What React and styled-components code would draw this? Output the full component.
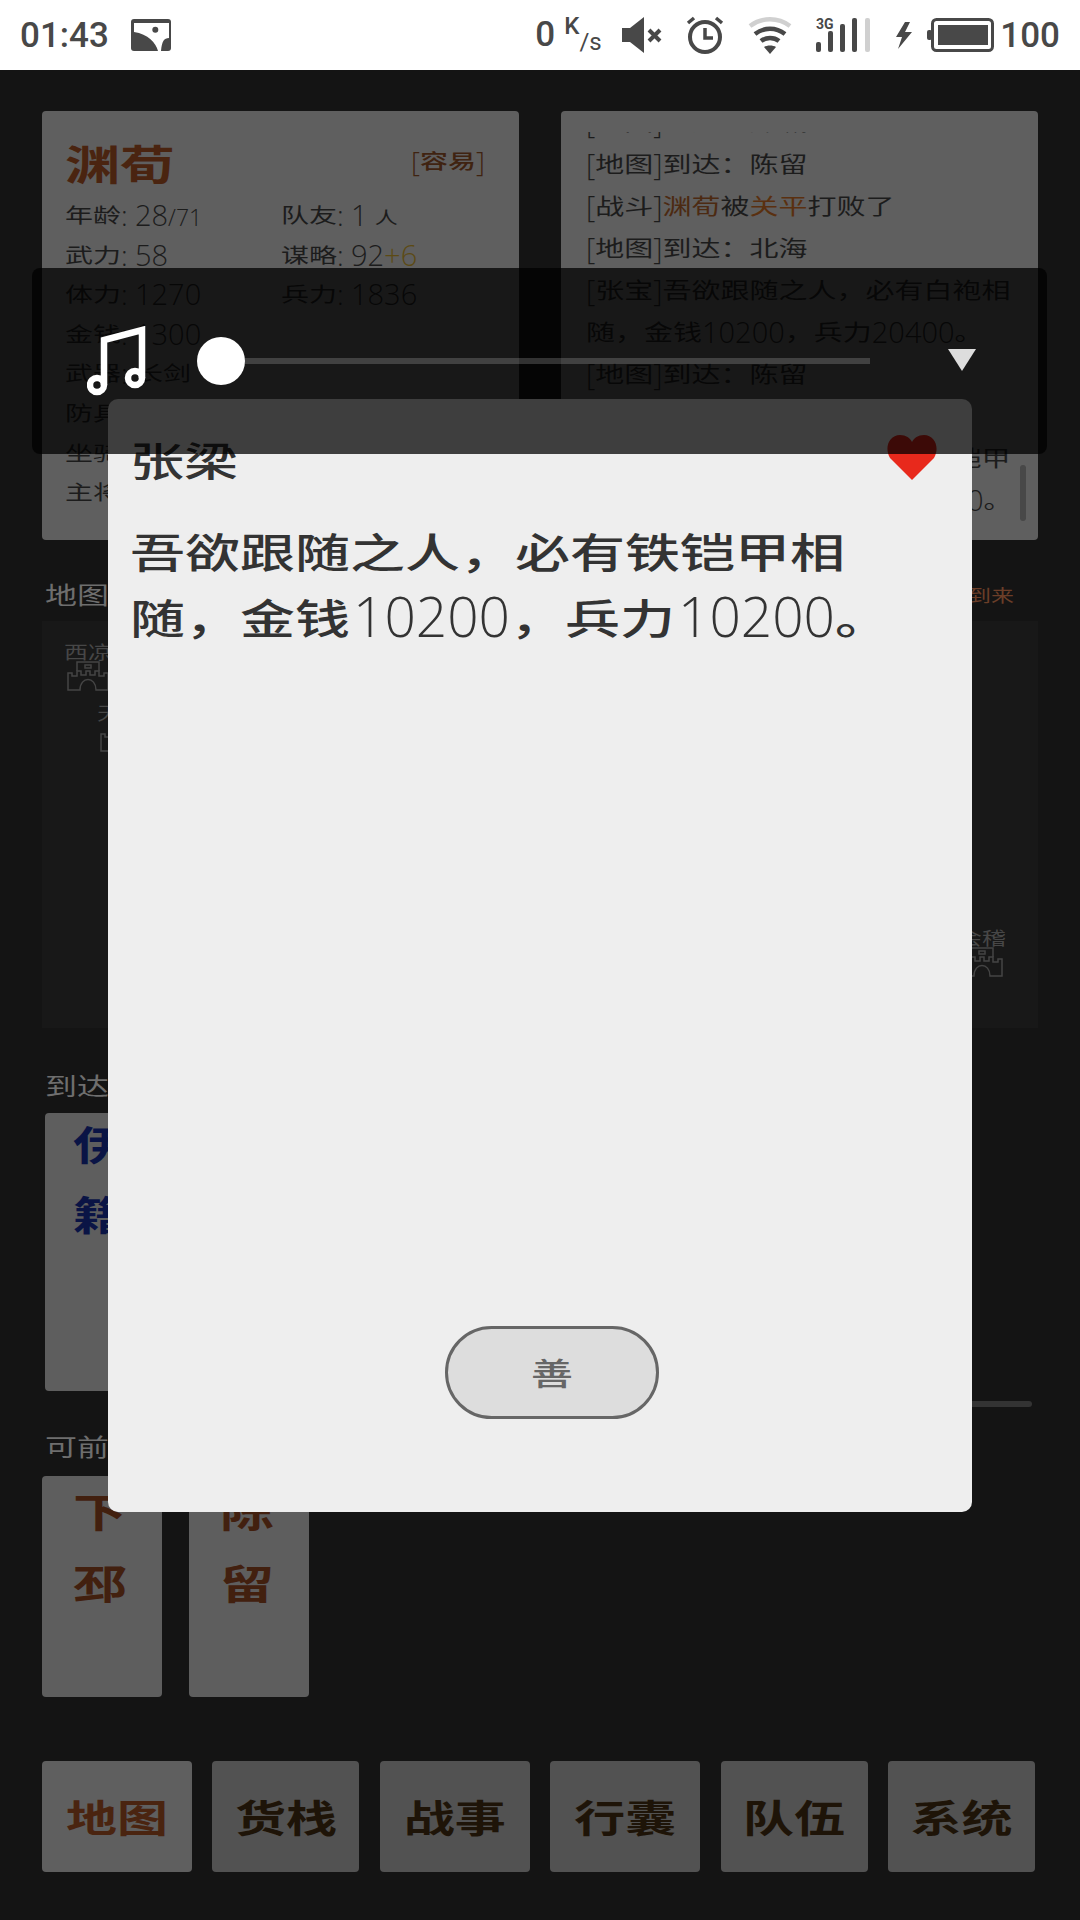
import React from "react";
import styled, { createGlobalStyle } from "styled-components";

const Global = createGlobalStyle`
  html, body { margin: 0; padding: 0; background: #141414; }
  * { box-sizing: border-box; }
`;

const CJK = `"Noto Sans CJK SC", "Noto Sans", sans-serif`;
const LATIN = `"Open Sans", "Noto Sans CJK SC", sans-serif`;

const Screen = styled.div`
  position: relative;
  width: 1080px;
  height: 1920px;
  overflow: hidden;
  background: #141414;
  font-family: ${LATIN};
  font-weight: 300;
`;

/* ---------- status bar ---------- */
const StatusBar = styled.div`
  height: 70px;
  background: #fff;
  display: flex;
  align-items: center;
  justify-content: space-between;
  padding: 0 20px 0 20px;
  color: #484848;
  font-family: Roboto, sans-serif;
  font-weight: 500;
  font-size: 35px;
`;
const StatusGroup = styled.div`
  display: flex;
  align-items: center;
`;
const StatusIcon = styled.svg`
  display: block;
  flex: none;
  margin-left: ${(p) => p.$ml || 0}px;
`;
const Speed = styled.div`
  display: flex;
  align-items: flex-start;
  height: 40px;
  line-height: 40px;
  width: 66px;
`;
const SpeedUnit = styled.span`
  font-size: 24px;
  line-height: 22px;
  margin-left: 9px;
`;
const SpeedSub = styled.span`
  font-size: 24px;
  line-height: 22px;
  margin-top: 16px;
  font-weight: 400;
`;
const Percent = styled.span`
  margin-left: 6px;
`;

/* ---------- squat clerical-looking CJK run ---------- */
const Li = styled.span`
  display: inline-block;
  font-family: ${CJK};
  font-weight: ${(p) => p.$w || 400};
  transform: scaleY(0.74);
  white-space: pre;
`;
const Rich = ({ text, w }) =>
  text
    .split(/([\u3000-\u9fff\uff00-\uffef]+)/)
    .map((part, i) =>
      i % 2 ? (
        <Li key={i} $w={w}>
          {part}
        </Li>
      ) : (
        part
      )
    );

/* ---------- base page ---------- */
const TopCards = styled.div`
  display: grid;
  grid-template-columns: 477px 477px;
  gap: 42px;
  padding: 41px 42px 0;
`;
const Card = styled.div`
  position: relative;
  height: 429px;
  background: #5f5f5f;
  border-radius: 4px;
  overflow: hidden;
`;
const PersonCard = styled(Card)`
  padding: 30px 34px 0 23px;
  color: #1c1c1c;
`;
const PersonHead = styled.div`
  display: flex;
  justify-content: space-between;
  align-items: center;
  height: 44px;
`;
const PersonName = styled.div`
  font-size: 55px;
  line-height: 44px;
  color: #4a2410;
`;
const Difficulty = styled.div`
  font-size: 28px;
  line-height: 36px;
  color: #3f2311;
  margin-top: -5px;
`;
const StatGrid = styled.div`
  display: grid;
  grid-template-columns: 216px 1fr;
  grid-auto-rows: 39.6px;
  margin-top: 10px;
  font-size: 28px;
  line-height: 39.6px;
  white-space: nowrap;
`;
const Digits = styled.span`
  font-size: 29px;
`;
const Small = styled.span`
  font-size: 23px;
`;
const Bonus = styled.span`
  color: #5c4a14;
`;
const FullRow = styled.div`
  grid-column: 1 / 3;
`;

const LogCard = styled(Card)`
  padding: 21px 0 0 25px;
`;
const LogClip = styled.div`
  height: 408px;
  overflow: hidden;
`;
const LogList = styled.div`
  margin-top: -33px;
  font-size: 29px;
  line-height: 42px;
  color: #1c1c1c;
  white-space: nowrap;
`;
const LogLine = styled.div`
  height: 42px;
`;
const Colored = styled.span`
  color: ${(p) => p.$c};
`;
const Scrollbar = styled.div`
  position: absolute;
  left: 459px;
  top: 354px;
  width: 6px;
  height: 56px;
  border-radius: 3px;
  background: #484848;
`;

const SectionHead = styled.div`
  display: flex;
  justify-content: space-between;
  align-items: center;
  height: 26px;
  margin-top: ${(p) => p.$mt}px;
  padding: 0 66px 0 45px;
`;
const SectionLabel = styled.div`
  font-size: 32px;
  line-height: 26px;
  color: #6e6e6e;
  white-space: nowrap;
`;
const Coming = styled.div`
  font-size: 23px;
  line-height: 26px;
  color: #6b3e28;
`;
const MapArea = styled.div`
  position: relative;
  height: 407px;
  margin: 13px 42px 0;
  background: #181818;
`;
const MapNode = styled.div`
  position: absolute;
  left: ${(p) => p.$x}px;
  top: ${(p) => p.$y}px;
  width: 48px;
  display: flex;
  flex-direction: column;
  align-items: center;
  color: #474747;
  font-size: 24px;
  line-height: 17px;
`;
const Fort = styled.svg`
  display: block;
  margin-top: 1px;
`;

const ArriveRow = styled.div`
  margin-top: 14px;
  padding-left: 45px;
`;
const PlaceCard = styled.div`
  width: ${(p) => p.$w}px;
  height: ${(p) => p.$h}px;
  background: #5e5e5e;
  border-radius: 4px;
  color: ${(p) => p.$c};
  font-size: 54px;
  overflow: hidden;
`;
const PlaceStack = styled.div`
  margin-top: ${(p) => p.$top}px;
  padding-left: ${(p) => p.$left}px;
  line-height: ${(p) => p.$pitch}px;
`;
const PlaceChar = styled.div``;
const LowerBar = styled.div`
  height: 6px;
  margin: 10px 48px 0 auto;
  width: 120px;
  border-radius: 3px;
  background: #333;
`;
const RoutesRow = styled.div`
  display: flex;
  gap: 27px;
  margin-top: 16px;
  padding-left: 42px;
`;
const NavBar = styled.div`
  display: flex;
  justify-content: space-between;
  margin-top: 64px;
  padding: 0 45px 0 42px;
`;
const NavButton = styled.div`
  width: ${(p) => p.$w}px;
  height: 111px;
  border-radius: 4px;
  background: ${(p) => (p.$active ? "#5f5f5f" : "#525252")};
  color: ${(p) => (p.$active ? "#4a2410" : "#1e1408")};
  font-size: 51px;
  line-height: 111px;
  text-align: center;
`;

/* ---------- dialog ---------- */
const Modal = styled.div`
  position: absolute;
  left: 108px;
  top: 399px;
  width: 864px;
  height: 1113px;
  border-radius: 10px;
  background: #eee;
  display: flex;
  flex-direction: column;
  padding: 38px 35px 93px 22px;
  color: #333;
`;
const ModalHead = styled.div`
  display: flex;
  justify-content: space-between;
  align-items: center;
  height: 46px;
`;
const ModalTitle = styled.div`
  font-size: 54px;
  line-height: 46px;
`;
const Heart = styled.svg`
  display: block;
  margin-top: -6px;
`;
const ModalBody = styled.div`
  margin-top: 34px;
  font-size: 55px;
  line-height: 66px;
  white-space: nowrap;
`;
const ModalLine = styled.div`
  height: 66px;
`;
const ModalNum = styled.span`
  font-size: 55px;
  margin-left: 3px;
  vertical-align: 3px;
`;
const OkButton = styled.div`
  align-self: center;
  margin: auto 0 0 37px;
  width: 214px;
  height: 93px;
  border: 3px solid #666;
  border-radius: 47px;
  background: #ddd;
  color: #666;
  font-size: 42px;
  line-height: 85px;
  text-align: center;
`;

/* ---------- music panel ---------- */
const MusicPanel = styled.div`
  position: absolute;
  left: 32px;
  top: 268px;
  width: 1015px;
  height: 186px;
  border-radius: 8px;
  background: rgba(0, 0, 0, 0.74);
  display: flex;
  align-items: center;
  padding-left: 55px;
`;
const MusicIcon = styled.svg`
  display: block;
  flex: none;
`;
const Slider = styled.div`
  display: flex;
  align-items: center;
  width: 673px;
  margin-left: 51px;
`;
const Thumb = styled.div`
  flex: none;
  width: 48px;
  height: 48px;
  border-radius: 50%;
  background: #fff;
`;
const Track = styled.div`
  flex: 1;
  height: 6px;
  background: rgba(255, 255, 255, 0.18);
`;
const Caret = styled.div`
  width: 0;
  height: 0;
  margin: -2px 0 0 78px;
  border-left: 14.5px solid transparent;
  border-right: 14.5px solid transparent;
  border-top: 22px solid #ddd;
`;

const FortIcon = () => (
  <Fort width="42" height="30" viewBox="0 0 42 30" fill="none" stroke="#444" strokeWidth="1.5">
    <path d="M1 29V12H5V15H10V10H14V14H19V10H23V14H28V10H32V15H37V12H41V29H29C29 15 13 15 13 29Z" />
    <path d="M10 10V1H32V10" />
    <rect x="18" y="4" width="6" height="3" />
  </Fort>
);

const logs = [
  [{ t: "[地图]到达：彭城" }],
  [{ t: "[地图]到达：陈留" }],
  [{ t: "[战斗]" }, { t: "渊荀", c: "#4c2a12" }, { t: "被" }, { t: "关平", c: "#5a3010" }, { t: "打败了" }],
  [{ t: "[地图]到达：北海" }],
  [{ t: "[张宝]吾欲跟随之人，必有白袍相" }],
  [{ t: "随，金钱10200，兵力20400。" }],
  [{ t: "[地图]到达：陈留" }],
  [{ t: "[地图]到达：下邳" }],
  [{ t: "[张角]吾欲跟随之人，必有铁铠甲" }],
  [{ t: "相随，金钱10200，兵力10200。" }],
];

const tabs = [
  ["地图", 150, true],
  ["货栈", 147],
  ["战事", 150],
  ["行囊", 150],
  ["队伍", 147],
  ["系统", 147],
];

export default function App() {
  return (
    <Screen>
      <Global />
      <StatusBar>
        <StatusGroup>
          01:43
          <StatusIcon $ml={22} width="40" height="32" viewBox="0 0 40 32">
            <rect width="40" height="32" rx="3" fill="#484848" />
            <path d="M3 4H38V19C33 19 31 22 30 32H27C25 24 17 15 3 13Z" fill="#fff" />
            <circle cx="24.3" cy="10.7" r="3" fill="#484848" />
          </StatusIcon>
        </StatusGroup>
        <StatusGroup>
          <Speed>
            0<SpeedUnit>K</SpeedUnit>
            <SpeedSub>/s</SpeedSub>
          </Speed>
          <StatusIcon $ml={21} width="40" height="36" viewBox="0 0 40 36" fill="#484848">
            <path d="M0 11H8L22 0V36L8 25H0Z" />
            <path d="M27 13L38 24M38 13L27 24" stroke="#484848" strokeWidth="4" />
          </StatusIcon>
          <StatusIcon $ml={24} width="38" height="38" viewBox="0 0 38 38" fill="none" stroke="#484848">
            <circle cx="19" cy="21" r="15" strokeWidth="4" />
            <path d="M19 12V22H27" strokeWidth="3.5" />
            <path d="M2 7L8 2M36 7L30 2" strokeWidth="3.5" />
          </StatusIcon>
          <StatusIcon $ml={24} width="44" height="38" viewBox="0 0 44 38" fill="none" strokeWidth="4.5">
            <path d="M2 10C14 1 30 1 42 10" stroke="#d0d0d0" />
            <path d="M7 18C16 11 28 11 37 18" stroke="#484848" />
            <path d="M13 25C18 21 26 21 31 25" stroke="#484848" />
            <path d="M22 38L16 31C19 29 25 29 28 31Z" fill="#484848" />
          </StatusIcon>
          <StatusIcon $ml={24} width="54" height="34" viewBox="0 0 54 34">
            <text x="0" y="11" fontFamily="Roboto, sans-serif" fontWeight="700" fontSize="14" fill="#484848">3G</text>
            <rect x="0" y="24" width="5" height="10" rx="2" fill="#484848" />
            <rect x="12" y="13" width="5" height="21" rx="2" fill="#484848" />
            <rect x="24" y="6" width="5" height="28" rx="2" fill="#484848" />
            <rect x="36" y="0" width="5" height="34" rx="2" fill="#484848" />
            <rect x="49" y="0" width="5" height="34" rx="2" fill="#d0d0d0" />
          </StatusIcon>
          <StatusIcon $ml={24} width="19" height="27" viewBox="0 0 19 27">
            <path d="M11 0L2 15H8L4 27L18 10H11L16 0Z" fill="#484848" />
          </StatusIcon>
          <StatusIcon $ml={14} width="67" height="34" viewBox="0 0 67 34" fill="none">
            <rect x="0" y="12" width="5" height="10" rx="2" fill="#484848" />
            <rect x="5.5" y="1.5" width="60" height="31" rx="4" stroke="#484848" strokeWidth="3" />
            <rect x="11" y="7" width="50" height="20" fill="#484848" />
          </StatusIcon>
          <Percent>100</Percent>
        </StatusGroup>
      </StatusBar>

      <TopCards>
        <PersonCard>
          <PersonHead>
            <PersonName>
              <Li $w={700}>渊荀</Li>
            </PersonName>
            <Difficulty>
              <Rich text="[容易]" w={500} />
            </Difficulty>
          </PersonHead>
          <StatGrid>
            <div>
              <Li>年龄</Li>: <Digits>28</Digits>
              <Small>/71</Small>
            </div>
            <div>
              <Li>队友</Li>: <Digits>1</Digits>{" "}
              <Small>
                <Li>人</Li>
              </Small>
            </div>
            <div>
              <Li>武力</Li>: <Digits>58</Digits>
            </div>
            <div>
              <Li>谋略</Li>: <Digits>92</Digits>
              <Digits>
                <Bonus>+6</Bonus>
              </Digits>
            </div>
            <div>
              <Li>体力</Li>: <Digits>1270</Digits>
            </div>
            <div>
              <Li>兵力</Li>: <Digits>1836</Digits>
            </div>
            <FullRow>
              <Li>金钱</Li>: <Digits>1300</Digits>
            </FullRow>
            <FullRow>
              <Li>武器</Li>: <Li>长剑</Li>
            </FullRow>
            <FullRow>
              <Li>防具</Li>: <Li>皮甲</Li>
            </FullRow>
            <FullRow>
              <Li>坐骑</Li>: <Li>白马</Li>
            </FullRow>
            <FullRow>
              <Li>主将</Li>: <Li>张宝</Li>
            </FullRow>
          </StatGrid>
        </PersonCard>
        <LogCard>
          <LogClip>
            <LogList>
              {logs.map((segs, i) => (
                <LogLine key={i}>
                  {segs.map((s, j) =>
                    s.c ? (
                      <Colored key={j} $c={s.c}>
                        <Rich text={s.t} />
                      </Colored>
                    ) : (
                      <Rich key={j} text={s.t} />
                    )
                  )}
                </LogLine>
              ))}
            </LogList>
          </LogClip>
          <Scrollbar />
        </LogCard>
      </TopCards>

      <SectionHead $mt={42}>
        <SectionLabel>
          <Li>地图</Li>
        </SectionLabel>
        <Coming>
          <Li>秋季到来</Li>
        </Coming>
      </SectionHead>
      <MapArea>
        <MapNode $x={22} $y={22}>
          <Li>西凉</Li>
          <FortIcon />
        </MapNode>
        <MapNode $x={55} $y={83}>
          <Li>天水</Li>
          <FortIcon />
        </MapNode>
        <MapNode $x={916} $y={308}>
          <Li>会稽</Li>
          <FortIcon />
        </MapNode>
      </MapArea>

      <SectionHead $mt={45}>
        <SectionLabel>
          <Li>到达</Li>
        </SectionLabel>
      </SectionHead>
      <ArriveRow>
        <PlaceCard $w={200} $h={278} $c="#0a1445">
          <PlaceStack $top={-4} $left={28} $pitch={68}>
            <PlaceChar>
              <Li $w={700}>伊</Li>
            </PlaceChar>
            <PlaceChar>
              <Li $w={700}>籍</Li>
            </PlaceChar>
          </PlaceStack>
        </PlaceCard>
      </ArriveRow>
      <LowerBar />

      <SectionHead $mt={27}>
        <SectionLabel>
          <Li>可前往</Li>
        </SectionLabel>
      </SectionHead>
      <RoutesRow>
        <PlaceCard $w={120} $h={221} $c="#42200f">
          <PlaceStack $top={-1} $left={31} $pitch={69}>
            <PlaceChar>
              <Li $w={700}>下</Li>
            </PlaceChar>
            <PlaceChar>
              <Li $w={700}>邳</Li>
            </PlaceChar>
          </PlaceStack>
        </PlaceCard>
        <PlaceCard $w={120} $h={221} $c="#42200f">
          <PlaceStack $top={-1} $left={31} $pitch={69}>
            <PlaceChar>
              <Li $w={700}>陈</Li>
            </PlaceChar>
            <PlaceChar>
              <Li $w={700}>留</Li>
            </PlaceChar>
          </PlaceStack>
        </PlaceCard>
      </RoutesRow>

      <NavBar>
        {tabs.map(([label, w, active]) => (
          <NavButton key={label} $w={w} $active={active}>
            <Li $w={700}>{label}</Li>
          </NavButton>
        ))}
      </NavBar>

      <Modal>
        <ModalHead>
          <ModalTitle>
            <Li $w={500}>张梁</Li>
          </ModalTitle>
          <Heart width="50" height="45" viewBox="0 0 50 45">
            <path
              d="M25 45L3 23C-3 13 2 0 13 0C19 0 23 3 25 7C27 3 31 0 37 0C48 0 53 13 47 23Z"
              fill="#e8291c"
            />
          </Heart>
        </ModalHead>
        <ModalBody>
          <ModalLine>
            <Li $w={500}>吾欲跟随之人，必有铁铠甲相</Li>
          </ModalLine>
          <ModalLine>
            <Li $w={500}>随，金钱</Li>
            <ModalNum>10200</ModalNum>
            <Li $w={500}>，兵力</Li>
            <ModalNum>10200</ModalNum>
            <Li $w={500}>。</Li>
          </ModalLine>
        </ModalBody>
        <OkButton>
          <Li $w={500}>善</Li>
        </OkButton>
      </Modal>

      <MusicPanel>
        <MusicIcon width="59" height="70" viewBox="0 0 59 70" fill="none" stroke="#fff">
          <path d="M17 59V14L55 4V52" strokeWidth="6.5" />
          <circle cx="10" cy="59" r="7" strokeWidth="6.5" />
          <circle cx="48" cy="52" r="7" strokeWidth="6.5" />
        </MusicIcon>
        <Slider>
          <Thumb />
          <Track />
        </Slider>
        <Caret />
      </MusicPanel>
    </Screen>
  );
}
